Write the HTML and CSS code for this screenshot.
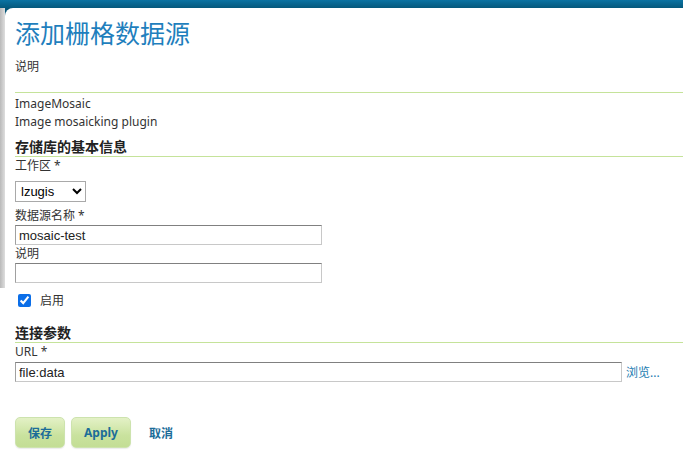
FILE: index.html
```html
<!DOCTYPE html>
<html lang="zh-CN">
<head>
  <meta charset="UTF-8" />
  <title>添加栅格数据源</title>
  <link rel="stylesheet" href="styles.css">
</head>
<body>
  <div class="top-bar"></div>
  <div class="page">
    <div class="side"></div>
    <div class="panel">
      <h1 class="page-title">添加栅格数据源</h1>
      <p class="desc">说明</p>

      <div class="store-type">
        <p>ImageMosaic</p>
        <p>Image mosaicking plugin</p>
      </div>

      <h3 class="section">存储库的基本信息</h3>
      <div class="field">
        <label>工作区 *</label>
        <select class="ws-select">
          <option>lzugis</option>
        </select>
      </div>
      <div class="field">
        <label>数据源名称 *</label>
        <input type="text" class="text-input" value="mosaic-test">
      </div>
      <div class="field">
        <label>说明</label>
        <input type="text" class="text-input" value="">
      </div>
      <div class="check-row">
        <input type="checkbox" checked>
        <span>启用</span>
      </div>

      <h3 class="section">连接参数</h3>
      <div class="field">
        <label>URL *</label>
        <div class="url-row">
          <input type="text" class="text-input url-input" value="file:data">
          <a href="#" class="browse">浏览...</a>
        </div>
      </div>

      <div class="actions">
        <button class="btn">保存</button>
        <button class="btn">Apply</button>
        <a href="#" class="cancel">取消</a>
      </div>
    </div>
  </div>
</body>
</html>
```

FILE: styles.css
```css
* {
  margin: 0;
  padding: 0;
  box-sizing: border-box;
}

body {
  font-family: "Noto Sans", "Noto Sans CJK SC", sans-serif;
  font-size: 12px;
  color: #333;
  background: #fff;
  width: 683px;
  height: 464px;
  overflow: hidden;
}

.top-bar {
  height: 9px;
  background: linear-gradient(#0b73a3, #045577);
}

.page {
  display: flex;
  background: linear-gradient(#045577 0, #07587a 8px, #fff 8px);
}

.side {
  width: 5px;
  flex: none;
  background: linear-gradient(to right, #b9b9b9, #dedede);
  height: 280px;
  margin-top: -1px;
}

.panel {
  flex: 1;
  background: #fff;
  border-top-left-radius: 8px;
  margin-top: -1px;
  padding: 0 0 0 10px;
  min-height: 460px;
}

.page-title {
  font-family: "Noto Sans CJK SC", sans-serif;
  font-weight: normal;
  font-size: 25px;
  color: #1f7fbd;
  line-height: 30px;
  padding-top: 9px;
}

.desc {
  margin-top: 12px;
  line-height: 16px;
  height: 34px;
  border-bottom: 1px solid #c5e39a;
}

.store-type {
  padding-top: 2px;
}

.store-type p {
  line-height: 18px;
}

.section {
  font-size: 14px;
  font-weight: bold;
  color: #222;
  line-height: 18px;
  margin-top: 7px;
  border-bottom: 1px solid #c5e39a;
  padding-bottom: 0;
}

.field label {
  display: block;
  line-height: 16px;
  margin-top: 1px;
}

.ws-select {
  margin-top: 7px;
  margin-bottom: 5px;
  width: 71px;
  height: 21px;
  font-family: "Liberation Sans", sans-serif;
  font-size: 13px;
  color: #000;
  border: 1px solid #a9a9a9;
  background: #fff;
  padding-left: 1px;
}

.text-input {
  display: block;
  width: 307px;
  height: 20px;
  margin-top: 1px;
  font-family: "Liberation Sans", sans-serif;
  font-size: 13px;
  color: #222;
  border: 1px solid #c8c8c8;
  border-top-color: #808080;
  border-left-color: #a0a0a0;
  padding: 0 3px;
  background: #fff;
}

.check-row {
  display: flex;
  align-items: center;
  gap: 9px;
  margin-top: 9px;
  padding-left: 3px;
  height: 16px;
}

.check-row input {
  width: 13px;
  height: 13px;
  accent-color: #0b6ee8;
}

.check-row + .section {
  margin-top: 16px;
}

.url-row {
  display: flex;
  align-items: center;
  gap: 4px;
  margin-top: 1px;
}

.url-input {
  width: 607px;
}

.browse {
  color: #1a7bb0;
  text-decoration: none;
  font-size: 12px;
}

.actions {
  display: flex;
  align-items: center;
  gap: 6px;
  margin-top: 35px;
}

.btn {
  height: 31px;
  padding: 0 12px;
  border: 1px solid #cde3ae;
  border-radius: 5px;
  background: linear-gradient(#e3f1c6, #c9e29e 60%, #c3de95);
  color: #1c6d99;
  font-family: "Noto Sans", "Noto Sans CJK SC", sans-serif;
  font-size: 12px;
  font-weight: bold;
  box-shadow: 0 1px 1px rgba(0, 0, 0, 0.08);
}

.cancel {
  margin-left: 12px;
  color: #1c6d99;
  font-weight: bold;
  text-decoration: none;
}
```
